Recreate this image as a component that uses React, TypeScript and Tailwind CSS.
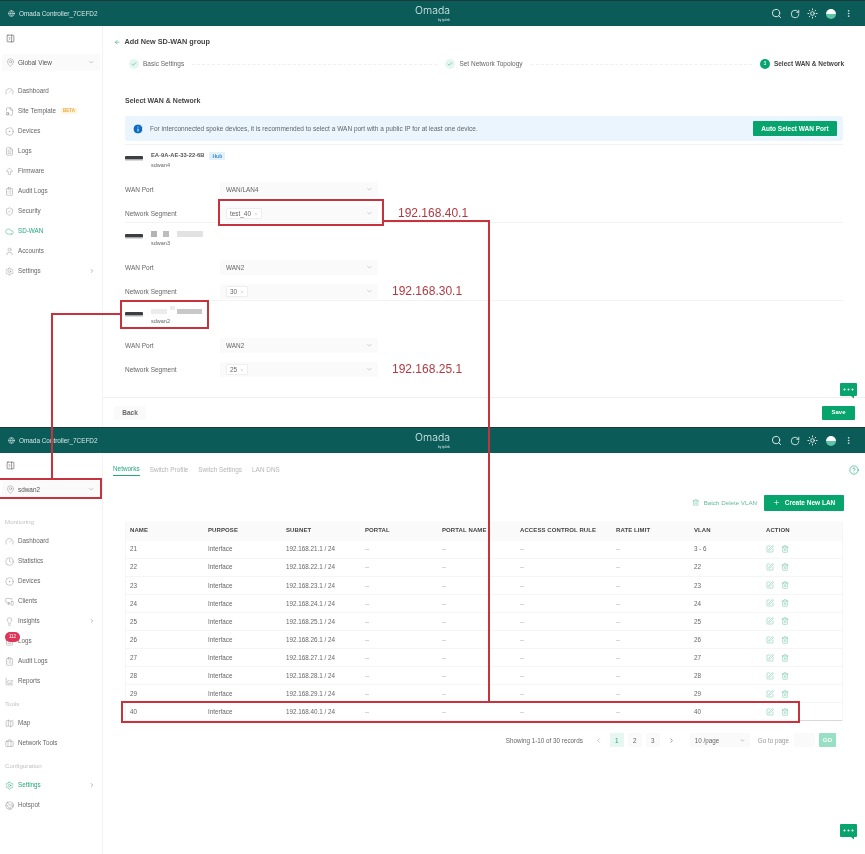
import type { ReactNode } from 'react';
import {
  ArrowBigUp, ArrowLeft, Briefcase, Check, ChartArea, ChevronDown, ChevronLeft, ChevronRight, CircleDot,
  CircleHelp, ClipboardList, Clock, Cloud, Earth, FileCog, FileText, Gauge, Globe, Info, Lightbulb,
  Map as MapIcon, MapPin, MonitorSmartphone, MoreVertical, PanelRightClose, Plus, RotateCw, Search,
  Settings, ShieldCheck, SquarePen, Sun, Trash2, User, X,
} from 'lucide-react';

type NavItem = { label: string; icon: typeof Gauge; active?: boolean; chevron?: boolean; beta?: boolean };

const globalNav: NavItem[] = [
  { label: 'Dashboard', icon: Gauge },
  { label: 'Site Template', icon: FileCog, beta: true },
  { label: 'Devices', icon: CircleDot },
  { label: 'Logs', icon: FileText },
  { label: 'Firmware', icon: ArrowBigUp },
  { label: 'Audit Logs', icon: ClipboardList },
  { label: 'Security', icon: ShieldCheck },
  { label: 'SD-WAN', icon: Cloud, active: true },
  { label: 'Accounts', icon: User },
  { label: 'Settings', icon: Settings, chevron: true },
];

const monitoring: NavItem[] = [
  { label: 'Dashboard', icon: Gauge },
  { label: 'Statistics', icon: Clock },
  { label: 'Devices', icon: CircleDot },
  { label: 'Clients', icon: MonitorSmartphone },
  { label: 'Insights', icon: Lightbulb, chevron: true },
  { label: 'Logs', icon: FileText },
  { label: 'Audit Logs', icon: ClipboardList },
  { label: 'Reports', icon: ChartArea },
];

const rows = [
  ['21', '192.168.21.1 / 24', '3 - 6'],
  ['22', '192.168.22.1 / 24', '22'],
  ['23', '192.168.23.1 / 24', '23'],
  ['24', '192.168.24.1 / 24', '24'],
  ['25', '192.168.25.1 / 24', '25'],
  ['26', '192.168.26.1 / 24', '26'],
  ['27', '192.168.27.1 / 24', '27'],
  ['28', '192.168.28.1 / 24', '28'],
  ['29', '192.168.29.1 / 24', '29'],
  ['40', '192.168.40.1 / 24', '40'],
];

const columns = 'grid grid-cols-[78px_78px_79px_77px_78px_96px_78px_72px_1fr] items-center pl-[4px]';

function Header() {
  return (
    <div className="h-[26px] shrink-0 bg-[#0b5b59] border-t border-[#1c3a3c] flex items-center justify-between text-white relative">
      <div className="flex items-center gap-[4px] pl-[8px] text-[6.4px] text-[#d5e6e5]">
        <Globe size={7} />
        Omada Controller_7CEFD2
      </div>
      <div className="absolute left-[415px] top-[3px] flex flex-col items-end text-[#dcebea]">
        <span className="text-[10.5px] font-['Inter',sans-serif] font-light leading-[13px]">Omada</span>
        <span className="text-[3px] leading-[4px] mt-[1px]">by tp-link</span>
      </div>
      <div className="flex items-center gap-[7.5px] pr-[12px] text-[#e6f0ef]">
        <Search size={11} />
        <RotateCw size={10} />
        <Sun size={11} />
        <span className="w-[10px] h-[10px] rounded-full bg-gradient-to-b from-white from-50% to-[#5cc3a5] to-50%" />
        <MoreVertical size={9} className="ml-[1px]" />
      </div>
    </div>
  );
}

function NavRow({ item, badge }: { item: NavItem; badge?: string }) {
  const Icon = item.icon;
  return (
    <div className={`relative h-[20px] flex items-center pl-[5px] pr-[6px] text-[6.3px] ${item.active ? 'text-[#22a67c]' : 'text-[#666]'}`}>
      <Icon size={9} strokeWidth={1.2} className={`mr-[4px] shrink-0 ${item.active ? 'text-[#22a67c]' : 'text-[#8a8a8a]'}`} />
      {item.label}
      {item.beta && <span className="ml-[5px] px-[2px] text-[4.5px] bg-[#fff4e0] text-[#f0a93a] font-bold">BETA</span>}
      {item.chevron && <ChevronRight size={6} className="ml-auto mr-[1px] text-[#777]" />}
      {badge && (
        <span className="absolute left-[5px] top-[1px] w-[15px] h-[10px] rounded-full bg-[#dc3558] text-white text-[4.5px] flex items-center justify-center">
          {badge}
        </span>
      )}
    </div>
  );
}

function SiteSelect({ label }: { label: string }) {
  return (
    <div className="mt-[4px] mx-[2px] h-[17px] rounded-[2px] bg-[#fafafa] flex items-center pl-[4px] pr-[6px] text-[6.4px] text-[#555]">
      <MapPin size={9} strokeWidth={1.2} className="mr-[3px] text-[#888]" />
      {label}
      <ChevronDown size={6.5} className="ml-auto text-[#999]" />
    </div>
  );
}

function SidebarToggle() {
  return (
    <div className="h-[24px] flex items-center pl-[6px] text-[#555]">
      <PanelRightClose size={9} strokeWidth={1.6} />
    </div>
  );
}

function GroupLabel({ children, className = '' }: { children: ReactNode; className?: string }) {
  return <div className={`h-[18px] flex items-center pl-[5px] text-[6.2px] text-[#c2c2c2] ${className}`}>{children}</div>;
}

function Select({ children }: { children: ReactNode }) {
  return (
    <div className="w-[158px] h-[15px] rounded-[2px] bg-[#fafafa] flex items-center pl-[6px] pr-[6px] text-[6.4px] text-[#666]">
      {children}
      <ChevronDown size={6.5} className="ml-auto text-[#aaa]" />
    </div>
  );
}

function Tag({ text }: { text: string }) {
  return (
    <span className="h-[11px] px-[3px] bg-white border border-[#eeeeee] rounded-[1px] flex items-center gap-[3px] text-[6.4px] text-[#666]">
      {text}
      <X size={4} className="text-[#aaa]" />
    </span>
  );
}

function DeviceIcon() {
  return (
    <svg width="18" height="6" viewBox="0 0 18 6" className="shrink-0 mb-[4px]">
      <rect x="0" y="1" width="18" height="3.5" rx="1" fill="#3b3f42" />
      <rect x="0" y="4.5" width="18" height="1" fill="#b5b5b5" />
    </svg>
  );
}

// blurred-out MAC address in the source shot
function MaskedName({ wide }: { wide?: boolean }) {
  if (wide) {
    return (
      <div className="flex items-center h-[9px]">
        <span className="h-[5px] w-[16px] blur-[0.6px] bg-[#ececec]" />
        <span className="h-[4px] w-[5px] ml-[3px] mb-[7px] blur-[0.6px] bg-[#ececec]" />
        <span className="h-[5px] w-[25px] ml-[2px] blur-[0.6px] bg-[#c8c8c8]" />
      </div>
    );
  }
  return (
    <div className="flex items-center h-[9px]">
      <span className="h-[6px] w-[6px] blur-[0.6px] bg-[#b4b4b4]" />
      <span className="h-[6px] w-[6px] ml-[6px] blur-[0.6px] bg-[#bcbcbc]" />
      <span className="h-[6px] w-[26px] ml-[8px] blur-[0.6px] bg-[#e2e2e2]" />
    </div>
  );
}

function DeviceGroup({ name, sub, port, segment, ip, ipGap, wide, last }: {
  name?: string; sub: string; port: string; segment: string; ip: string; ipGap: string; wide?: boolean; last?: boolean;
}) {
  return (
    <div className={`h-[78px] ${last ? '' : 'border-b border-[#f3f3f3]'}`}>
      <div className="h-[27px] flex items-center pt-[3px]">
        <DeviceIcon />
        <div className="ml-[8px]">
          {name ? (
            <div className="flex items-center gap-[5px] text-[5.8px] font-bold text-[#555] h-[9px]">
              {name}
              <span className="px-[3px] h-[8px] leading-[8px] bg-[#e3f1fb] text-[#3d8fd0] text-[5px] rounded-[1px]">Hub</span>
            </div>
          ) : (
            <MaskedName wide={wide} />
          )}
          <div className="text-[5.5px] text-[#666] mt-[1px] leading-[8px]">{sub}</div>
        </div>
      </div>
      <div className="mt-[10px] flex items-center">
        <span className="w-[95px] text-[6.5px] text-[#666]">WAN Port</span>
        <Select>{port}</Select>
      </div>
      <div className="mt-[9px] flex items-center">
        <span className="w-[95px] text-[6.5px] text-[#666]">Network Segment</span>
        <Select><Tag text={segment} /></Select>
        <span className={`${ipGap} text-[12px] leading-[15px] text-[#b23a40]`}>{ip}</span>
      </div>
    </div>
  );
}

function StepDone({ label }: { label: string }) {
  return (
    <div className="flex items-center gap-[4px] text-[6.5px] text-[#666]">
      <span className="w-[10px] h-[10px] rounded-full bg-[#e5f6f0] flex items-center justify-center">
        <Check size={6} strokeWidth={2} className="text-[#22a67c]" />
      </span>
      {label}
    </div>
  );
}

function GreenButton({ children, className = '' }: { children: ReactNode; className?: string }) {
  return (
    <div className={`bg-[#08a46e] text-white font-bold rounded-[1px] flex items-center justify-center text-[6.5px] ${className}`}>
      {children}
    </div>
  );
}

function WizardPage() {
  return (
    <div className="h-[427px] flex flex-col">
      <Header />
      <div className="flex-1 flex min-h-0">
        <aside className="w-[103px] shrink-0 border-r border-[#f2f2f2]">
          <SidebarToggle />
          <SiteSelect label="Global View" />
          <div className="mt-[10px]">
            {globalNav.map((item) => <NavRow key={item.label} item={item} />)}
          </div>
        </aside>
        <main className="flex-1 flex flex-col min-w-0">
          <div className="flex-1 min-h-0">
            <div className="h-[12px] mt-[10px] ml-[11px] flex items-center gap-[3px] text-[7.3px] font-bold text-[#444]">
              <ArrowLeft size={6.5} strokeWidth={2} className="text-[#22a67c]" />
              <span className="ml-[1px]">Add New SD-WAN group</span>
            </div>
            <div className="h-[14px] mt-[9px] pl-[26px] pr-[21px] flex items-center">
              <StepDone label="Basic Settings" />
              <div className="flex-[247] mx-[8px] border-t border-dashed border-[#f0f0f0]" />
              <StepDone label="Set Network Topology" />
              <div className="flex-[223] mx-[8px] border-t border-dashed border-[#f0f0f0]" />
              <div className="flex items-center gap-[4px] text-[6.5px] font-bold text-[#444]">
                <span className="w-[10px] h-[10px] rounded-full bg-[#08a46e] text-white text-[5px] flex items-center justify-center font-normal">3</span>
                Select WAN &amp; Network
              </div>
            </div>
            <div className="px-[22px]">
              <div className="mt-[24px] h-[12px] flex items-center text-[7px] font-bold text-[#444]">Select WAN &amp; Network</div>
              <div className="mt-[9px] h-[25px] rounded-[3px] bg-[#eaf5fd] flex items-center pl-[7px] pr-[6px] text-[6.5px] text-[#666]">
                <Info size={12} fill="#0d6cc4" stroke="white" strokeWidth={2} className="mr-[6px] shrink-0" />
                For interconnected spoke devices, it is recommended to select a WAN port with a public IP for at least one device.
                <GreenButton className="ml-auto w-[84px] h-[15px]">Auto Select WAN Port</GreenButton>
              </div>
              <div className="mt-[3px] border-t border-[#f3f3f3]" />
              <DeviceGroup name="EA-9A-AE-33-22-6B" sub="sdwan4" port="WAN/LAN4" segment="test_40" ip="192.168.40.1" ipGap="ml-[20px]" />
              <DeviceGroup sub="sdwan3" port="WAN2" segment="30" ip="192.168.30.1" ipGap="ml-[14px]" />
              <DeviceGroup sub="sdwan2" port="WAN2" segment="25" ip="192.168.25.1" ipGap="ml-[14px]" wide last />
            </div>
          </div>
          <div className="h-[30px] shrink-0 border-t border-[#efefef] flex items-center justify-between pl-[11px] pr-[10px]">
            <div className="w-[32px] h-[14px] rounded-[2px] bg-[#fafafa] flex items-center justify-center text-[6.5px] font-bold text-[#666]">Back</div>
            <GreenButton className="w-[33px] h-[14px] text-[6px]">Save</GreenButton>
          </div>
        </main>
      </div>
    </div>
  );
}

function NetworksPage() {
  return (
    <div className="h-[427px] flex flex-col">
      <Header />
      <div className="flex-1 flex min-h-0">
        <aside className="w-[103px] shrink-0 border-r border-[#f2f2f2]">
          <SidebarToggle />
          <SiteSelect label="sdwan2" />
          <GroupLabel className="mt-[15px]">Monitoring</GroupLabel>
          {monitoring.map((item) => (
            <NavRow key={item.label} item={item} badge={item.label === 'Logs' ? '112' : undefined} />
          ))}
          <GroupLabel className="mt-[4px]">Tools</GroupLabel>
          <NavRow item={{ label: 'Map', icon: MapIcon }} />
          <NavRow item={{ label: 'Network Tools', icon: Briefcase }} />
          <GroupLabel className="mt-[4px]">Configuration</GroupLabel>
          <NavRow item={{ label: 'Settings', icon: Settings, active: true, chevron: true }} />
          <NavRow item={{ label: 'Hotspot', icon: Earth }} />
        </aside>
        <main className="flex-1 min-w-0 pr-[22px]">
          <div className="h-[21px] mt-[6px] flex items-center pl-[10px] gap-[10px] text-[6.4px] text-[#b5b5b5] relative">
            <span className="text-[#22a67c] border-b border-[#22a67c] h-[13px] leading-[12px]">Networks</span>
            <span>Switch Profile</span>
            <span>Switch Settings</span>
            <span>LAN DNS</span>
            <CircleHelp size={10} strokeWidth={1.5} className="absolute right-[-16px] text-[#22a67c]" />
          </div>
          <div className="mt-[14px] h-[17px] flex items-center justify-end gap-[7px] text-[6.2px] text-[#5fb89b]">
            <span className="flex items-center gap-[4px]">
              <Trash2 size={7.5} strokeWidth={1.4} />
              Batch Delete VLAN
            </span>
            <GreenButton className="-mr-[1px] w-[80px] h-[16px] gap-[5px]">
              <Plus size={7} strokeWidth={2} />
              Create New LAN
            </GreenButton>
          </div>
          <div className="ml-[22px] mt-[10px] rounded-t-[3px] border-x border-[#f5f5f5]">
            <div className={`${columns} h-[19.5px] bg-[#fafafa] rounded-t-[3px] text-[6px] font-bold text-[#444] tracking-[0.1px]`}>
              <span>NAME</span>
              <span>PURPOSE</span>
              <span>SUBNET</span>
              <span>PORTAL</span>
              <span>PORTAL NAME</span>
              <span>ACCESS CONTROL RULE</span>
              <span>RATE LIMIT</span>
              <span>VLAN</span>
              <span>ACTION</span>
            </div>
            {rows.map(([name, subnet, vlan]) => (
              <div key={name} className={`${columns} h-[18.1px] border-b border-[#f5f5f5] text-[6.3px] text-[#666]`}>
                <span>{name}</span>
                <span>Interface</span>
                <span>{subnet}</span>
                <span className="text-[#999]">--</span>
                <span className="text-[#999]">--</span>
                <span className="text-[#999]">--</span>
                <span className="text-[#999]">--</span>
                <span>{vlan}</span>
                <span className="flex items-center gap-[7px] text-[#62bd9f]">
                  <SquarePen size={8} strokeWidth={1.4} />
                  <Trash2 size={8} strokeWidth={1.4} />
                </span>
              </div>
            ))}
          </div>
          <div className="ml-[697px] mr-[1px] -mt-[1px] h-[1px] bg-[#d8d8d8]" />
          <div className="mt-[12px] mr-[7px] h-[14px] flex items-center justify-end text-[6.3px] text-[#666]">
            <span className="mr-[12px]">Showing 1-10 of 30 records</span>
            <ChevronLeft size={7} className="mr-[8px] text-[#999]" />
            <span className="w-[14px] h-[14px] bg-[#e6f7f1] text-[#22a67c] rounded-[1px] flex items-center justify-center">1</span>
            <span className="ml-[4px] w-[14px] h-[14px] bg-[#fafafa] rounded-[1px] flex items-center justify-center">2</span>
            <span className="ml-[4px] w-[14px] h-[14px] bg-[#fafafa] rounded-[1px] flex items-center justify-center">3</span>
            <ChevronRight size={7} className="ml-[8px] text-[#555]" />
            <div className="ml-[15px] w-[60px] h-[14px] bg-[#fafafa] rounded-[1px] flex items-center pl-[5px] pr-[5px]">
              10 /page
              <ChevronDown size={5} className="ml-auto" />
            </div>
            <span className="ml-[8px] text-[#999]">Go to page</span>
            <span className="ml-[5px] w-[21px] h-[14px] bg-[#fafafa] rounded-[1px]" />
            <span className="ml-[4px] w-[17px] h-[14px] bg-[#98e0c4] text-white text-[6px] font-bold rounded-[1px] flex items-center justify-center">GO</span>
          </div>
        </main>
      </div>
    </div>
  );
}

function ChatBubble({ className }: { className: string }) {
  return (
    <svg width="17" height="16" viewBox="0 0 17 16" className={`absolute ${className}`}>
      <path d="M1 0h15a1 1 0 0 1 1 1v11a1 1 0 0 1-1 1h-2v2.5L11 13H1a1 1 0 0 1-1-1V1a1 1 0 0 1 1-1z" fill="#08a46e" />
      <circle cx="4.5" cy="6.5" r="1" fill="#fff" />
      <circle cx="8.5" cy="6.5" r="1" fill="#fff" />
      <circle cx="12.5" cy="6.5" r="1" fill="#fff" />
    </svg>
  );
}

// red call-outs drawn on top of the two screenshots
function Annotations() {
  const line = 'absolute bg-[#c8323c]';
  const box = 'absolute border-2 border-[#c8323c]';
  return (
    <>
      <div className={`${box} left-[218px] top-[199px] w-[166px] h-[27px]`} />
      <div className={`${line} left-[384px] top-[220px] w-[105px] h-[2px]`} />
      <div className={`${line} left-[488px] top-[220px] w-[2px] h-[482px]`} />
      <div className={`${box} left-[121px] top-[701px] w-[679px] h-[22px]`} />
      <div className={`${box} left-[120px] top-[300px] w-[89px] h-[29px]`} />
      <div className={`${line} left-[51px] top-[313px] w-[70px] h-[2px]`} />
      <div className={`${line} left-[51px] top-[313px] w-[2px] h-[166px]`} />
      <div className={`${box} left-[-2px] top-[478px] w-[104px] h-[21px]`} />
    </>
  );
}

export default function App() {
  return (
    <div className="relative w-[865px] h-[854px] overflow-hidden bg-white font-['Liberation_Sans',Arial,sans-serif] blur-[0.35px]">
      <WizardPage />
      <NetworksPage />
      <Annotations />
      <ChatBubble className="left-[840px] top-[383px]" />
      <ChatBubble className="left-[840px] top-[824px]" />
    </div>
  );
}
